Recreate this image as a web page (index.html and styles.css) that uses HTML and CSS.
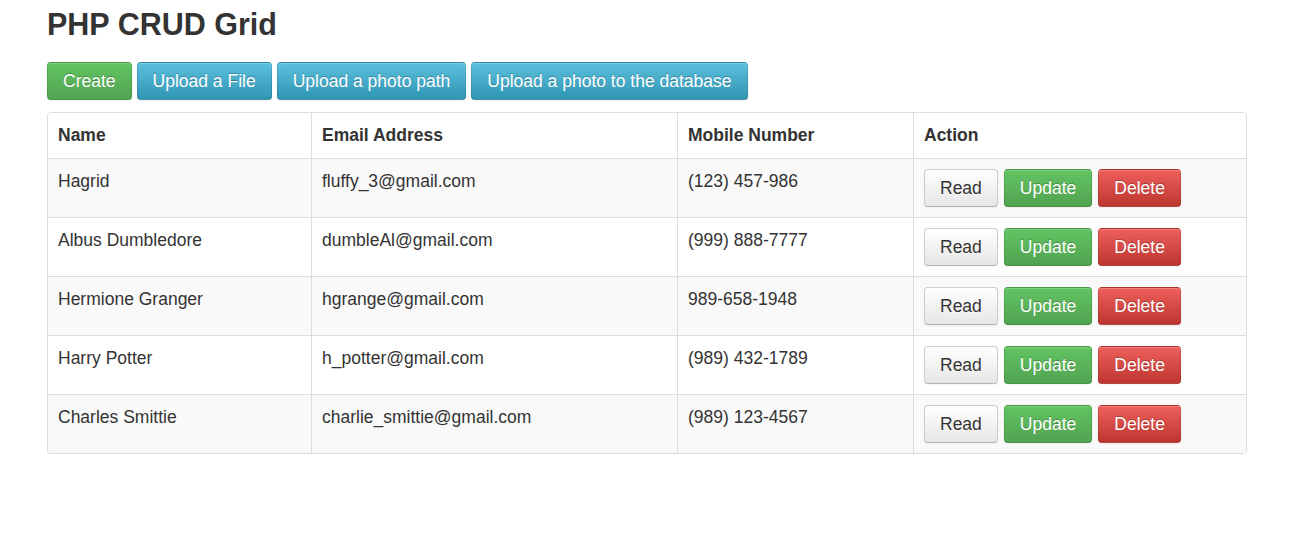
FILE: index.html
```html
<!DOCTYPE html>
<html lang="en">
<head>
<meta charset="utf-8">
<title>PHP CRUD Grid</title>
<link rel="stylesheet" href="styles.css">
</head>
<body>
<div class="container">
  <h1 class="title">PHP CRUD Grid</h1>
  <div class="toolbar">
    <a class="btn btn-success" href="#">Create</a>
    <a class="btn btn-info" href="#">Upload a File</a>
    <a class="btn btn-info" href="#">Upload a photo path</a>
    <a class="btn btn-info" href="#">Upload a photo to the database</a>
  </div>
  <div class="table-wrap">
    <table class="grid">
      <colgroup>
        <col class="c-name">
        <col class="c-email">
        <col class="c-mobile">
        <col class="c-action">
      </colgroup>
      <thead>
        <tr><th>Name</th><th>Email Address</th><th>Mobile Number</th><th>Action</th></tr>
      </thead>
      <tbody>
        <tr>
          <td>Hagrid</td><td>fluffy_3@gmail.com</td><td>(123) 457-986</td>
          <td><div class="actions"><a class="btn btn-default" href="#">Read</a><a class="btn btn-success" href="#">Update</a><a class="btn btn-danger" href="#">Delete</a></div></td>
        </tr>
        <tr>
          <td>Albus Dumbledore</td><td>dumbleAl@gmail.com</td><td>(999) 888-7777</td>
          <td><div class="actions"><a class="btn btn-default" href="#">Read</a><a class="btn btn-success" href="#">Update</a><a class="btn btn-danger" href="#">Delete</a></div></td>
        </tr>
        <tr>
          <td>Hermione Granger</td><td>hgrange@gmail.com</td><td>989-658-1948</td>
          <td><div class="actions"><a class="btn btn-default" href="#">Read</a><a class="btn btn-success" href="#">Update</a><a class="btn btn-danger" href="#">Delete</a></div></td>
        </tr>
        <tr>
          <td>Harry Potter</td><td>h_potter@gmail.com</td><td>(989) 432-1789</td>
          <td><div class="actions"><a class="btn btn-default" href="#">Read</a><a class="btn btn-success" href="#">Update</a><a class="btn btn-danger" href="#">Delete</a></div></td>
        </tr>
        <tr>
          <td>Charles Smittie</td><td>charlie_smittie@gmail.com</td><td>(989) 123-4567</td>
          <td><div class="actions"><a class="btn btn-default" href="#">Read</a><a class="btn btn-success" href="#">Update</a><a class="btn btn-danger" href="#">Delete</a></div></td>
        </tr>
      </tbody>
    </table>
  </div>
</div>
</body>
</html>
```

FILE: styles.css
```css
* { box-sizing: border-box; }

html, body {
  margin: 0;
  padding: 0;
  background: #fff;
}

body {
  font-family: "Liberation Sans", Arial, Helvetica, sans-serif;
  font-size: 17.5px;
  line-height: 24px;
  color: #333;
}

.container {
  width: 1200px;
  margin-left: 47px;
}

.title {
  margin: 8px 0 21px;
  font-size: 30.5px;
  line-height: 33px;
  font-weight: bold;
  color: #333;
}

.toolbar {
  display: flex;
  gap: 5px;
  margin-bottom: 12px;
}

.btn {
  display: inline-block;
  padding: 6px 15px;
  font-size: 17.5px;
  line-height: 24px;
  height: 38px;
  border: 1px solid rgba(0, 0, 0, 0.1);
  border-bottom-color: rgba(0, 0, 0, 0.25);
  border-radius: 4px;
  text-decoration: none;
  white-space: nowrap;
  color: #fff;
  text-shadow: 0 -1px 0 rgba(0, 0, 0, 0.25);
  box-shadow: inset 0 1px 0 rgba(255, 255, 255, 0.2), 0 1px 2px rgba(0, 0, 0, 0.05);
}

.btn-success {
  background-color: #5bb75b;
  background-image: linear-gradient(to bottom, #62c462 0, #51a351 100%);
}

.btn-info {
  background-color: #49afcd;
  background-image: linear-gradient(to bottom, #5bc0de 0, #2f96b4 100%);
}

.btn-danger {
  background-color: #da4f49;
  background-image: linear-gradient(to bottom, #ee5f5b 0, #bd362f 100%);
}

.btn-default {
  color: #333;
  text-shadow: 0 1px 1px rgba(255, 255, 255, 0.75);
  background-color: #f5f5f5;
  background-image: linear-gradient(to bottom, #ffffff 0, #e6e6e6 100%);
  border-color: #ccc;
  border-bottom-color: #b3b3b3;
}

.table-wrap {
  border: 1px solid #ddd;
  border-radius: 4px;
  overflow: hidden;
}

.grid {
  width: 100%;
  table-layout: fixed;
  border-collapse: separate;
  border-spacing: 0;
}

.c-name { width: 264px; }
.c-email { width: 366px; }
.c-mobile { width: 236px; }
.c-action { width: 332px; }

.grid th,
.grid td {
  text-align: left;
  vertical-align: top;
  padding: 10px;
  border-right: 1px solid #ddd;
  border-bottom: 1px solid #ddd;
}

.grid th:last-child,
.grid td:last-child {
  border-right: 0;
}

.grid tbody tr:last-child td {
  border-bottom: 0;
}

.grid th {
  font-weight: bold;
  padding-bottom: 11px;
  background: #fff;
}

.grid tbody tr:nth-child(odd) td {
  background: #f9f9f9;
}

.actions {
  display: flex;
  gap: 6px;
}
```
